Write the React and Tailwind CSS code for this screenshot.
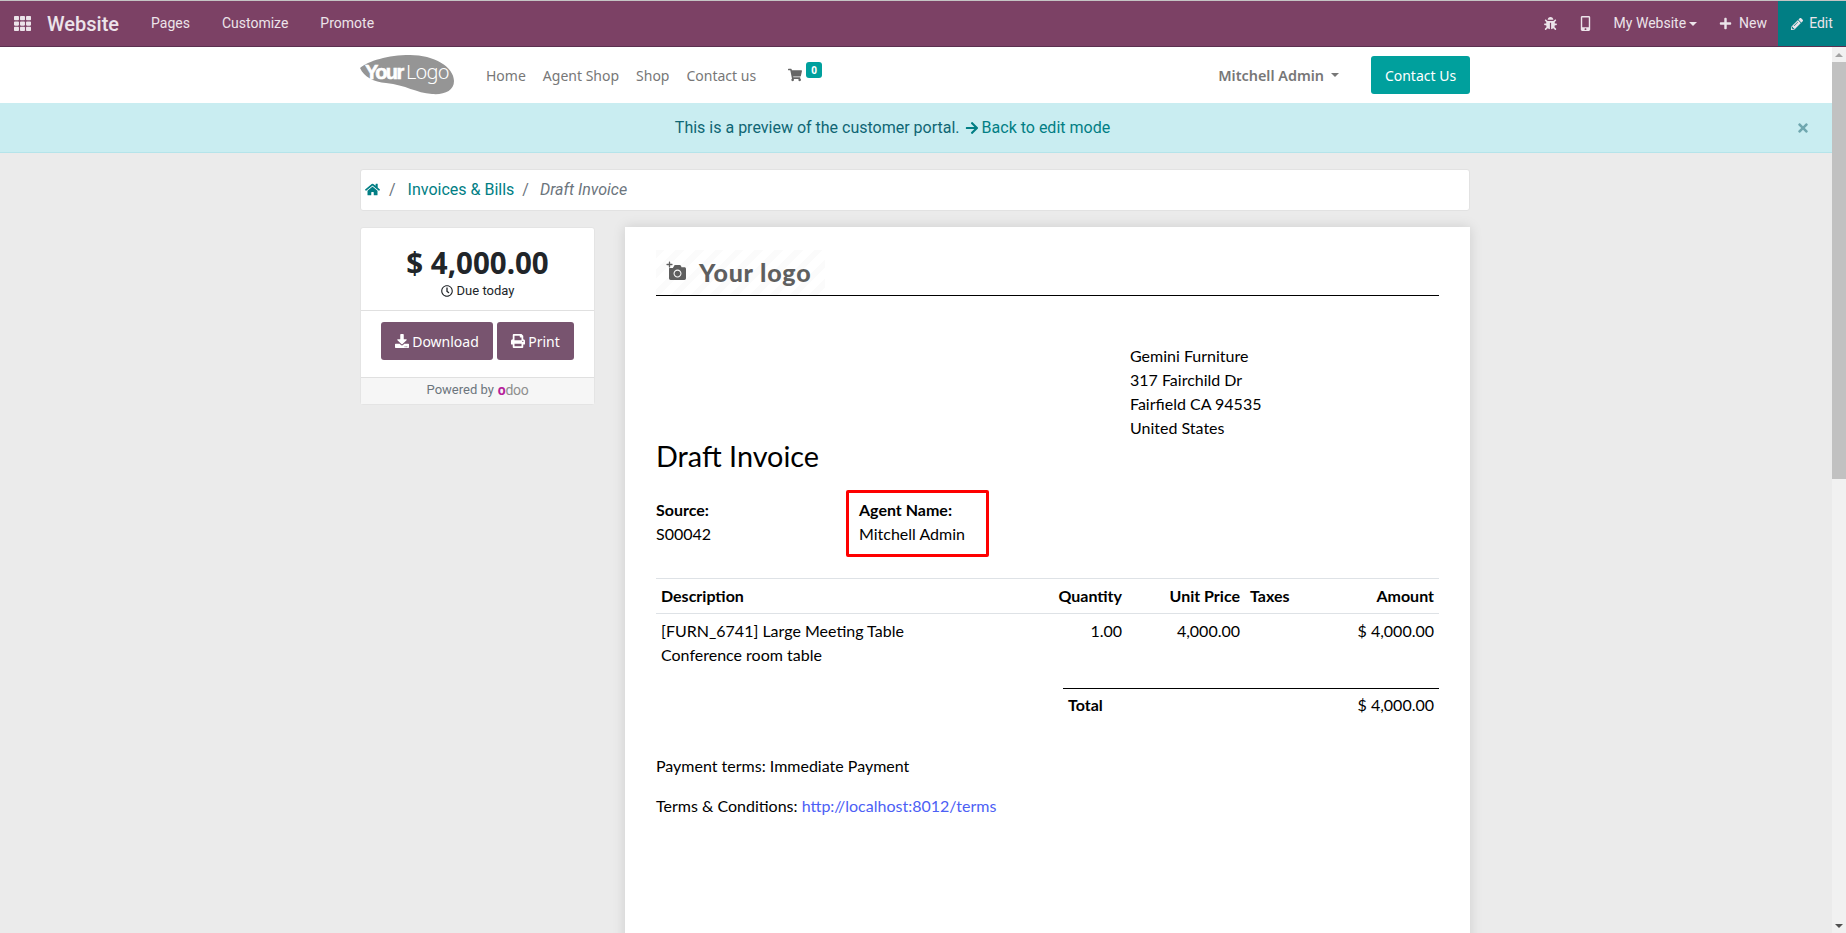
import React from "react";
import {
  FaTh, FaBug, FaMobileAlt, FaPlus, FaPencilAlt, FaHome, FaShoppingCart,
  FaArrowRight, FaTimes, FaRegClock, FaDownload, FaPrint, FaCamera,
} from "react-icons/fa";

const roboto = "font-['Roboto',sans-serif]";
const nav = "font-['Noto_Sans',sans-serif]";

function TopBar() {
  return (
    <div className={`h-[47px] shrink-0 border-t border-t-[#c4c4c4] border-b border-b-[#5b3050] bg-[#7c4165] flex items-center text-[#ece4ea] text-[14px] ${roboto}`}>
      <FaTh className="ml-[14px] w-[17px] h-[17px]" />
      <span className="ml-[16px] text-[20px] font-medium">Website</span>
      <span className="ml-[32px]">Pages</span>
      <span className="ml-[32px]">Customize</span>
      <span className="ml-[32px]">Promote</span>
      <div className="ml-auto flex items-center h-full">
        <FaBug className="w-[13px] h-[13px]" />
        <FaMobileAlt className="ml-[22px] w-[13px] h-[15px]" />
        <span className="ml-[22px]">My Website</span>
        <span className="ml-[3px] border-x-[4px] border-x-transparent border-t-[4px] border-t-[#ece4ea]" />
        <FaPlus className="ml-[22px] w-[13px] h-[13px]" />
        <span className="ml-[7px]">New</span>
        <div className="ml-[11px] w-[68px] h-full bg-[#017e84] flex items-center justify-center gap-[6px]">
          <FaPencilAlt className="w-[12px] h-[12px]" />
          <span>Edit</span>
        </div>
      </div>
    </div>
  );
}

function Logo() {
  return (
    <svg width="96" height="42" viewBox="0 0 96 42" className="shrink-0">
      <path d="M0 14 C8 7 28 1 50 1 C74 1 94 13 94 27 C94 37 84 41 72 40 C56 39 46 31 26 29 C14 28 4 23 0 14 Z" fill="#959595" />
      <text x="5" y="25" fontFamily="'Liberation Sans',sans-serif" fontWeight="700" fontSize="20" letterSpacing="-1.6" fill="#fff" stroke="#fff" strokeWidth="0.6">Your</text>
      <text x="46" y="25" fontFamily="'Noto Sans',sans-serif" fontWeight="300" fontSize="20" letterSpacing="-0.8" fill="#fff">Logo</text>
    </svg>
  );
}

function NavBar() {
  return (
    <div className={`h-[56px] shrink-0 bg-white shadow-[0_1px_3px_rgba(0,0,0,0.2)] relative flex items-center pl-[360px] pr-[362px] text-[14px] text-[#777] ${nav}`}>
      <Logo />
      <span className="ml-[30px]">Home</span>
      <span className="ml-[17px]">Agent Shop</span>
      <span className="ml-[17px]">Shop</span>
      <span className="ml-[17px]">Contact us</span>
      <div className="ml-[32px] relative flex items-center">
        <FaShoppingCart className="w-[14px] h-[14px] text-[#666]" />
        <span className="absolute left-[18px] -top-[6px] w-[16px] h-[16px] rounded-[3px] bg-[#00a09d] text-white text-[10px] font-bold flex items-center justify-center">0</span>
      </div>
      <span className="ml-auto mt-[1px] font-semibold text-[14.4px]">Mitchell Admin</span>
      <span className="ml-[7px] border-x-[4px] border-x-transparent border-t-[4px] border-t-[#777]" />
      <button className="ml-[32px] w-[99px] h-[38px] rounded-[3px] bg-[#00a09d] text-white">Contact Us</button>
    </div>
  );
}

function Alert() {
  return (
    <div className={`h-[50px] shrink-0 bg-[#c9edf1] border-b border-[#b5e4ea] flex items-center justify-center relative text-[16px] text-[#0f6674] ${roboto}`}>
      <span className="mr-[47px] flex items-center">
        This is a preview of the customer portal.
        <FaArrowRight className="ml-[5px] mr-[3px] w-[14px] h-[14px] text-[#017e84]" />
        <span className="text-[#017e84]">Back to edit mode</span>
      </span>
      <FaTimes className="absolute right-[22px] top-[18px] w-[14px] h-[14px] text-[#6fa7af]" />
    </div>
  );
}

function Breadcrumb() {
  return (
    <div className={`h-[42px] rounded-[3px] bg-white border border-[#e2e2e2] flex items-center px-[4px] text-[16px] ${roboto}`}>
      <FaHome className="-mt-[1px] w-[15px] h-[15px] text-[#017e84]" />
      <span className="ml-[9px] text-[#6c757d]">/</span>
      <span className="ml-[12px] text-[#017e84]">Invoices &amp; Bills</span>
      <span className="ml-[8px] text-[#6c757d]">/</span>
      <span className="ml-[11px] italic text-[#6c757d]">Draft Invoice</span>
    </div>
  );
}

function Sidebar() {
  return (
    <div className={`w-[235px] h-[178px] shrink-0 mt-[1px] rounded-[3px] bg-white border border-[#e4e4e4] flex flex-col ${roboto}`}>
      <div className="h-[83px] border-b border-[#e0e0e0] flex flex-col items-center text-[#212529]">
        <div className={`mt-[16px] text-[29.5px] leading-[38px] font-bold ${nav}`}>$ 4,000.00</div>
        <div className="mt-[1px] flex items-center gap-[4px] text-[13px] leading-[16px]">
          <FaRegClock className="w-[12px] h-[12px]" />
          <span>Due today</span>
        </div>
      </div>
      <div className={`h-[66px] pl-[20px] pt-[11px] flex gap-[4px] text-[14px] text-white ${nav}`}>
        <button className="w-[112px] h-[38px] rounded-[3px] bg-[#714b67]/95 flex items-center justify-center gap-[3px]">
          <FaDownload className="w-[14px] h-[14px]" />Download
        </button>
        <button className="w-[77px] h-[38px] rounded-[3px] bg-[#714b67]/95 flex items-center justify-center gap-[3px]">
          <FaPrint className="w-[14px] h-[14px]" />Print
        </button>
      </div>
      <div className="flex-1 border-t border-[#e0e0e0] bg-[#f6f6f6] flex items-center justify-center text-[13px] text-[#6c757d] pb-[2px]">
        <span>Powered by</span>
        <span className="ml-[4px] text-[14px] leading-[13px] tracking-[-0.3px] text-[#8f8f8f]"><span className="text-[#b5219b] font-bold">o</span>doo</span>
      </div>
    </div>
  );
}

function Document() {
  return (
    <div className="flex-1 h-[800px] mt-[1px] bg-white shadow-[0_0_12px_rgba(0,0,0,0.13)] px-[31px] pt-[23px] text-[16px] leading-[24px] text-black font-['Lato',sans-serif]">
      <div className="h-[46px] border-b border-black">
        <div className="w-[169px] h-[45px] flex items-center pl-[12px] bg-[repeating-linear-gradient(135deg,#fbfbfb_0,#fbfbfb_6px,#fff_6px,#fff_14px)]">
          <span className="relative">
            <FaCamera className="w-[19px] h-[17px] text-[#5f5f5f]" />
            <FaPlus className="absolute -left-[2px] -top-[3px] w-[7px] h-[7px] text-[#5f5f5f] bg-white" />
          </span>
          <span className="ml-[12px] -mt-[1px] text-[25px] tracking-[0.8px] font-black text-[#5f5f5f]">Your logo</span>
        </div>
      </div>
      <div className="ml-[474px] mt-[48px]">
        <div>Gemini Furniture</div>
        <div>317 Fairchild Dr</div>
        <div>Fairfield CA 94535</div>
        <div>United States</div>
      </div>
      <h2 className="text-[28.8px] leading-[34px] -mt-[1px]">Draft Invoice</h2>
      <div className="flex mt-[17px]">
        <div className="w-[190px] pt-[8px]">
          <div className="font-bold">Source:</div>
          <div>S00042</div>
        </div>
        <div className="w-[143px] h-[67px] border-[3px] border-[#fe0000] rounded-[2px] pl-[10px] pt-[5px]">
          <div className="font-bold">Agent Name:</div>
          <div>Mitchell Admin</div>
        </div>
      </div>
      <table className="w-full table-fixed mt-[21px] border-t border-[#dee2e6]">
        <colgroup>
          <col className="w-[384px]" />
          <col className="w-[87px]" />
          <col className="w-[118px]" />
          <col className="w-[80px]" />
          <col />
        </colgroup>
        <thead>
          <tr className="border-b border-[#dee2e6] font-bold">
            <th className="px-[5px] pt-[5px] pb-[5px] text-left">Description</th>
            <th className="px-[5px] text-right">Quantity</th>
            <th className="px-[5px] text-right">Unit Price</th>
            <th className="px-[5px] text-left">Taxes</th>
            <th className="px-[5px] text-right">Amount</th>
          </tr>
        </thead>
        <tbody>
          <tr className="align-top">
            <td className="px-[5px] pt-[5px]">[FURN_6741] Large Meeting Table<br />Conference room table</td>
            <td className="px-[5px] pt-[5px] text-right">1.00</td>
            <td className="px-[5px] pt-[5px] text-right">4,000.00</td>
            <td className="px-[5px]" />
            <td className="px-[5px] pt-[5px] text-right">$ 4,000.00</td>
          </tr>
        </tbody>
      </table>
      <div className="ml-auto w-[376px] mt-[21px] border-t border-black flex justify-between px-[5px] pt-[4px]">
        <span className="font-bold">Total</span>
        <span>$ 4,000.00</span>
      </div>
      <p className="mt-[37px]">Payment terms: Immediate Payment</p>
      <p className="mt-[16px]">Terms &amp; Conditions: <span className="text-[#4c60f5]">http://localhost:8012/terms</span></p>
    </div>
  );
}

function Scrollbar() {
  return (
    <div className="w-[14px] shrink-0 bg-[#f1f1f1] flex flex-col items-center relative">
      <span className="mt-[6px] border-x-[4px] border-x-transparent border-b-[4px] border-b-[#a3a3a3]" />
      <div className="mt-[5px] w-full h-[417px] bg-[#c1c1c1]" />
      <span className="absolute bottom-[5px] border-x-[4px] border-x-transparent border-t-[4px] border-t-[#505050]" />
    </div>
  );
}

export default function App() {
  return (
    <div className="h-[933px] overflow-hidden flex flex-col bg-[#ebebeb]">
      <TopBar />
      <div className="flex-1 min-h-0 flex">
        <div className="flex-1 min-w-0 flex flex-col overflow-hidden">
          <NavBar />
          <Alert />
          <div className="pl-[360px] pr-[362px] pt-[16px]">
            <Breadcrumb />
            <div className="mt-[15px] flex gap-[30px] items-start">
              <Sidebar />
              <Document />
            </div>
          </div>
        </div>
        <Scrollbar />
      </div>
    </div>
  );
}
